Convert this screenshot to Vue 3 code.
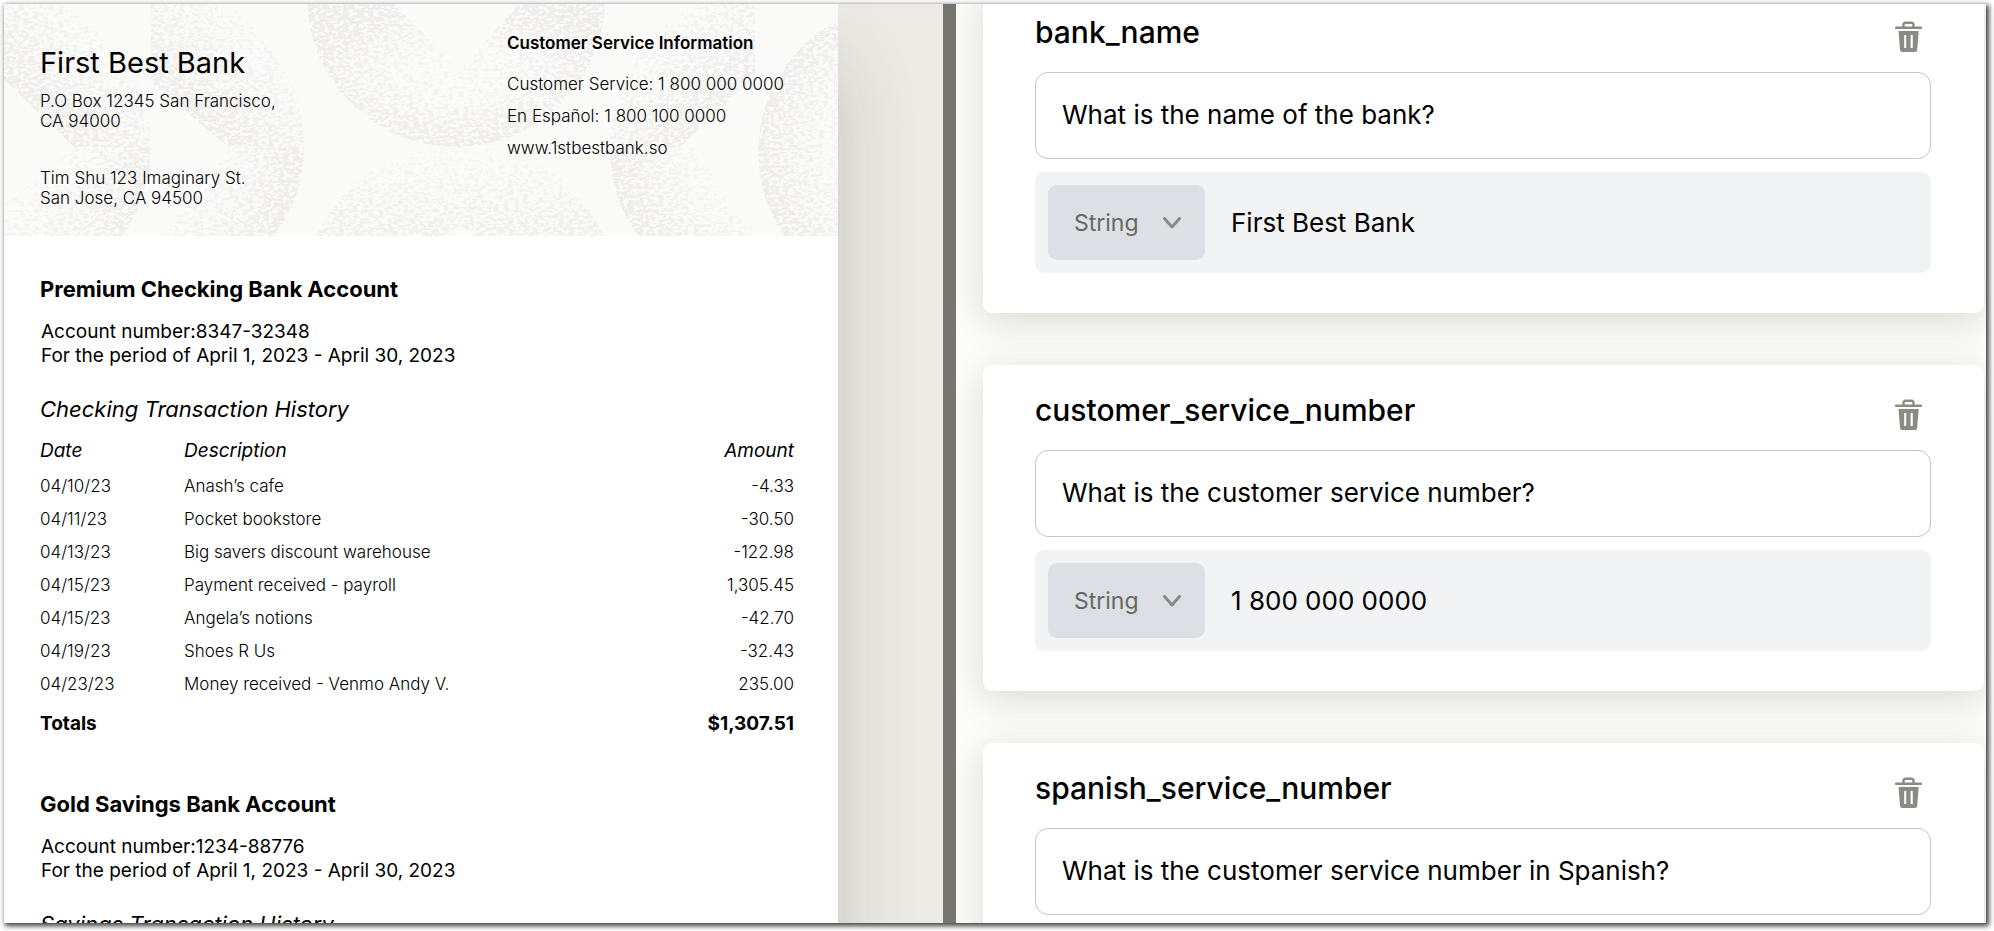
<script setup>
import { reactive } from 'vue'

const checkingRows = [
  { date: '04/10/23', description: 'Anash’s cafe', amount: '-4.33' },
  { date: '04/11/23', description: 'Pocket bookstore', amount: '-30.50' },
  { date: '04/13/23', description: 'Big savers discount warehouse', amount: '-122.98' },
  { date: '04/15/23', description: 'Payment received - payroll', amount: '1,305.45' },
  { date: '04/15/23', description: 'Angela’s notions', amount: '-42.70' },
  { date: '04/19/23', description: 'Shoes R Us', amount: '-32.43' },
  { date: '04/23/23', description: 'Money received - Venmo Andy V.', amount: '235.00' },
]

const fields = reactive([
  { name: 'bank_name', question: 'What is the name of the bank?', type: 'String', value: 'First Best Bank' },
  { name: 'customer_service_number', question: 'What is the customer service number?', type: 'String', value: '1 800 000 0000' },
  { name: 'spanish_service_number', question: 'What is the customer service number in Spanish?', type: 'String', value: '1 800 100 0000' },
])

function removeField(index) {
  fields.splice(index, 1)
}
</script>

<template>
  <div class="frame">
    <section class="viewer" aria-label="Document">
      <article class="doc">
        <header class="letterhead">
          <svg class="texture" viewBox="0 0 834 232" preserveAspectRatio="xMidYMid slice" aria-hidden="true">
            <defs>
              <filter id="stipple" filterUnits="userSpaceOnUse" x="0" y="0" width="834" height="232" color-interpolation-filters="sRGB">
                <feTurbulence type="fractalNoise" baseFrequency="0.2 0.34" numOctaves="2" seed="4" />
                <feColorMatrix values="0 0 0 0 0  0 0 0 0 0  0 0 0 0 0  1 0 0 0 0" result="noise" />
                <feComposite in="noise" in2="SourceAlpha" operator="arithmetic" k1="0" k2="1" k3="0.3" k4="-0.64" />
                <feComponentTransfer>
                  <feFuncA type="linear" slope="16" />
                </feComponentTransfer>
                <feComposite in2="SourceAlpha" operator="in" result="dots" />
                <feFlood flood-color="#ebe9e7" />
                <feComposite in2="dots" operator="in" />
              </filter>
              <radialGradient id="ring">
                <stop offset="0.3" stop-opacity="0.3" />
                <stop offset="1" stop-opacity="0.75" />
              </radialGradient>
              <linearGradient id="diagonal" x1="1" y1="0" x2="0" y2="1">
                <stop offset="0.2" stop-opacity="0.25" />
                <stop offset="0.8" stop-opacity="0.75" />
              </linearGradient>
              <linearGradient id="diagonalRight" x1="0" y1="0" x2="1" y2="1">
                <stop offset="0.2" stop-opacity="0.25" />
                <stop offset="0.8" stop-opacity="0.75" />
              </linearGradient>
              <radialGradient id="left" gradientUnits="userSpaceOnUse" cx="0" cy="143" r="149">
                <stop offset="0.4" stop-opacity="0.25" />
                <stop offset="1" stop-opacity="0.7" />
              </radialGradient>
              <radialGradient id="second" gradientUnits="userSpaceOnUse" cx="151" cy="143" r="149">
                <stop offset="0.4" stop-opacity="0.25" />
                <stop offset="1" stop-opacity="0.75" />
              </radialGradient>
              <radialGradient id="third" gradientUnits="userSpaceOnUse" cx="755" cy="143" r="149">
                <stop offset="0.4" stop-opacity="0.25" />
                <stop offset="1" stop-opacity="0.75" />
              </radialGradient>
              <radialGradient id="last" gradientUnits="userSpaceOnUse" cx="904" cy="143" r="152">
                <stop offset="0.5" stop-opacity="0.3" />
                <stop offset="1" stop-opacity="0.75" />
              </radialGradient>
              <linearGradient id="rise" x1="0" y1="0" x2="0" y2="1">
                <stop offset="0" stop-opacity="0.2" />
                <stop offset="1" stop-opacity="0.6" />
              </linearGradient>
            </defs>
            <g filter="url(#stipple)">
              <path d="M0 0H60Q100 30 125 66A149 149 0 0 1 147 143H70L0 76Z" fill="url(#diagonal)" />
              <path d="M70 143H147A149 149 0 0 1 118 232H0V200Z" fill="url(#left)" />
              <path d="M147 0H225Q262 30 280 66A149 149 0 0 1 300 143H224L147 78Z" fill="url(#diagonal)" />
              <path d="M224 143H300A149 149 0 0 1 270 232H160Z" fill="url(#second)" />
              <path d="M303 -6A149 149 0 0 0 601 -6H520L456 66L384 -6Z" fill="url(#ring)" />
              <path d="M456 143A150 150 0 0 0 312 232H440L456 221L472 232H600A150 150 0 0 0 456 143Z" fill="url(#rise)" />
              <path d="M625 66Q650 25 690 0H751V72L676 143H606A149 149 0 0 1 625 66Z" fill="url(#diagonalRight)" />
              <path d="M606 143H690L748 232H634A149 149 0 0 1 606 143Z" fill="url(#third)" />
              <path d="M834 16A149 149 0 0 0 780 232H834Z" fill="url(#last)" />
            </g>
          </svg>
          <div class="bank">
            <h1>First Best Bank</h1>
            <address>P.O Box 12345 San Francisco,<br />CA 94000</address>
            <address class="recipient">Tim Shu 123 Imaginary St.<br />San Jose, CA 94500</address>
          </div>
          <div class="service">
            <h2>Customer Service Information</h2>
            <p>Customer Service: 1 800 000 0000</p>
            <p>En Español: 1 800 100 0000</p>
            <p>www.1stbestbank.so</p>
          </div>
        </header>

        <section class="account">
          <h2>Premium Checking Bank Account</h2>
          <p class="meta">Account number:8347-32348<br />For the period of April 1, 2023 - April 30, 2023</p>
          <h3>Checking Transaction History</h3>
          <table>
            <thead>
              <tr>
                <th class="date" scope="col">Date</th>
                <th scope="col">Description</th>
                <th class="amount" scope="col">Amount</th>
              </tr>
            </thead>
            <tbody>
              <tr v-for="row in checkingRows" :key="row.description">
                <td>{{ row.date }}</td>
                <td>{{ row.description }}</td>
                <td class="amount">{{ row.amount }}</td>
              </tr>
            </tbody>
            <tfoot>
              <tr>
                <th colspan="2" scope="row">Totals</th>
                <td class="amount">$1,307.51</td>
              </tr>
            </tfoot>
          </table>
        </section>

        <section class="account">
          <h2>Gold Savings Bank Account</h2>
          <p class="meta">Account number:1234-88776<br />For the period of April 1, 2023 - April 30, 2023</p>
          <h3>Savings Transaction History</h3>
        </section>
      </article>
    </section>

    <div class="divider" role="separator" aria-orientation="vertical"></div>

    <section class="fields" aria-label="Fields">
      <div class="stack">
        <article v-for="(field, index) in fields" :key="field.name" class="card">
          <div class="card-head">
            <label :for="field.name">{{ field.name }}</label>
            <button type="button" class="trash" :aria-label="'Delete ' + field.name" @click="removeField(index)">
              <svg viewBox="0 0 27 31" width="27" height="31" aria-hidden="true">
                <path d="M8.500 6V3.500A1.800 1.800 0 0 1 10.300 1.700H16.700A1.800 1.800 0 0 1 18.500 3.500V6" fill="none" stroke="#888c84" stroke-width="2.400" />
                <path d="M1 5.500H26A1 1 0 0 1 26 8H1A1 1 0 0 1 1 5.500Z" fill="#888c84" />
                <path fill-rule="evenodd" d="M3.500 10H23.700L22.200 28.500A2.500 2.500 0 0 1 19.700 31H7.500A2.500 2.500 0 0 1 5 28.500ZM9.200 14V27H11.200V14ZM15.600 14V27H17.800V14Z" fill="#888c84" />
              </svg>
            </button>
          </div>
          <input :id="field.name" v-model="field.question" class="question" type="text" />
          <div class="answer">
            <div class="type">
              <select v-model="field.type" :aria-label="'Type of ' + field.name">
                <option>String</option>
                <option>Number</option>
                <option>Date</option>
              </select>
              <svg class="chevron" viewBox="0 0 18 12" width="18" height="12" aria-hidden="true">
                <path d="M1.500 1.500L9 10L16.500 1.500" fill="none" stroke="#888c84" stroke-width="3" stroke-linecap="round" stroke-linejoin="round" />
              </svg>
            </div>
            <span class="value">{{ field.value }}</span>
          </div>
        </article>
      </div>
    </section>
  </div>
</template>

<style>
body {
  background: #fff;
}
</style>

<style scoped>
* {
  box-sizing: border-box;
}

h1,
h2,
h3,
p {
  margin: 0;
}

.frame {
  display: grid;
  grid-template-columns: 939fr 13px 1030fr;
  height: calc(100vh - 12px);
  margin: 4px 8px 8px 4px;
  overflow: hidden;
  font-family: Inter, "Liberation Sans", sans-serif;
  color: #000;
  box-shadow: 2px 2px 5px 1px rgba(0, 0, 0, 0.75);
}

.viewer {
  min-height: 0;
  padding-right: 105px;
  overflow: hidden;
  background: #ebeae5;
}

.doc {
  min-height: 1080px;
  background: #fff;
  box-shadow: 0 60px 70px rgba(60, 60, 50, 0.22);
}

.letterhead {
  position: relative;
  display: grid;
  grid-template-columns: 467fr 331fr;
  padding: 29px 0 28px 36px;
  background: #fafaf8;
}

.texture {
  position: absolute;
  inset: 0;
  width: 100%;
  height: 100%;
}

.bank,
.service {
  position: relative;
}

.bank {
  padding-top: 12px;
}

.bank h1 {
  font-size: 29px;
  font-weight: 400;
  line-height: 36px;
}

address {
  margin-top: 10px;
  font-size: 17px;
  font-style: normal;
  font-weight: 300;
  line-height: 20px;
}

.recipient {
  margin-top: 37px;
}

.service h2 {
  margin-bottom: 15px;
  font-size: 17px;
  font-weight: 600;
  line-height: 20px;
}

.service p {
  font-size: 17px;
  font-weight: 300;
  line-height: 32px;
}

.account {
  padding: 39px 44px 4px 36px;
}

.account h2 {
  font-size: 22px;
  font-weight: 700;
  line-height: 28px;
}

.meta {
  margin-top: 17px;
  padding-left: 1px;
  font-size: 19px;
  line-height: 24px;
}

.account h3 {
  margin-top: 27px;
  font-size: 22px;
  font-style: italic;
  font-weight: 400;
  line-height: 28px;
}

table {
  width: 100%;
  margin-top: 10px;
  border-collapse: collapse;
}

th,
td {
  height: 33px;
  padding: 2px 0 0;
  font-size: 17px;
  font-weight: 300;
  line-height: 20px;
  text-align: left;
  vertical-align: middle;
}

thead th {
  height: 35px;
  padding: 0;
  font-size: 19px;
  font-style: italic;
  font-weight: 400;
}

tfoot th,
tfoot td {
  height: 48px;
  font-size: 19px;
  font-weight: 700;
}

th.date {
  width: 144px;
}

th.amount,
td.amount {
  text-align: right;
}

.divider {
  background: #77756f;
}

.fields {
  min-height: 0;
  padding: 0 2px 0 27px;
  overflow: hidden;
  background: #fcfcfa;
}

.stack {
  display: flex;
  flex-direction: column;
  gap: 52px;
  margin-top: -17px;
}

.card {
  padding: 28px 53px 40px 52px;
  border-radius: 9px;
  background: #fff;
  box-shadow: 0 8px 36px rgba(90, 85, 60, 0.2);
}

.card-head {
  display: flex;
  align-items: flex-end;
  justify-content: space-between;
  height: 37px;
  margin-bottom: 20px;
}

.card-head label {
  align-self: flex-start;
  font-size: 30px;
  font-weight: 500;
  line-height: 34px;
}

.trash {
  display: block;
  margin-right: 9px;
  padding: 0;
  border: 0;
  background: none;
}

.trash svg {
  display: block;
}

.question {
  display: block;
  width: 100%;
  height: 87px;
  padding: 0 26px 2px;
  border: 1px solid #c6c6bd;
  border-radius: 13px;
  background: #fff;
  font: 400 26px/32px Inter, "Liberation Sans", sans-serif;
  color: #000;
}

.answer {
  display: flex;
  align-items: center;
  gap: 26px;
  margin-top: 13px;
  padding: 13px;
  border-radius: 9px;
  background: #f2f3f5;
}

.type {
  position: relative;
}

.type select {
  display: block;
  width: 157px;
  height: 75px;
  padding: 0 26px;
  border: 0;
  border-radius: 9px;
  appearance: none;
  background: #dcdfe4;
  font: 400 23px/28px Inter, "Liberation Sans", sans-serif;
  color: #666963;
}

.chevron {
  position: absolute;
  top: 32px;
  right: 24px;
  pointer-events: none;
}

.value {
  font-size: 26px;
  line-height: 32px;
}
</style>
